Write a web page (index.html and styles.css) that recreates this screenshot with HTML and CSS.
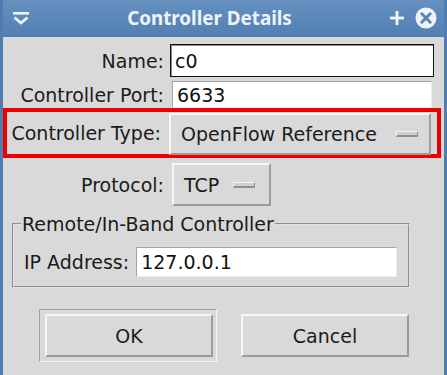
FILE: index.html
```html
<!DOCTYPE html>
<html>
<head>
<meta charset="utf-8">
<link rel="stylesheet" href="styles.css">
</head>
<body>
<div class="window">
  <div class="titlebar">
    <svg class="tb-shade" width="16" height="14" viewBox="0 0 16 14">
      <rect x="0" y="0" width="16" height="2.6" fill="#eef3f9"/>
      <polyline points="1.5,5.5 8,11 14.5,5.5" fill="none" stroke="#eef3f9" stroke-width="2.8" stroke-linejoin="miter"/>
    </svg>
    <div class="tb-title">Controller Details</div>
    <div class="tb-buttons">
      <svg width="14" height="14" viewBox="0 0 14 14">
        <rect x="5.6" y="0" width="2.8" height="14" fill="#eef3f9"/>
        <rect x="0" y="5.6" width="14" height="2.8" fill="#eef3f9"/>
      </svg>
      <svg width="22" height="22" viewBox="0 0 22 22">
        <circle cx="11" cy="11" r="10.5" fill="#eef3f9"/>
        <path d="M6.8 6.8 L15.2 15.2 M15.2 6.8 L6.8 15.2" stroke="#5a86b6" stroke-width="3" stroke-linecap="round"/>
      </svg>
    </div>
  </div>
  <div class="content">
    <div class="row row-name">
      <span class="label">Name:</span>
      <div class="entry entry-focus">c0</div>
    </div>
    <div class="row row-port">
      <span class="label">Controller Port:</span>
      <div class="entry">6633</div>
    </div>
    <div class="highlight">
      <div class="row row-type">
        <span class="label">Controller Type:</span>
        <div class="menubutton menu-wide">OpenFlow Reference<span class="indicator"></span></div>
      </div>
    </div>
    <div class="row row-proto">
      <span class="label">Protocol:</span>
      <div class="menubutton menu-narrow">TCP<span class="indicator"></span></div>
    </div>
    <fieldset class="group">
      <legend class="group-title">Remote/In-Band Controller</legend>
      <div class="ip-row">
        <span class="ip-label">IP Address:</span>
        <div class="entry entry-ip">127.0.0.1</div>
      </div>
    </fieldset>
    <div class="actions">
      <div class="default-ring"><div class="button">OK</div></div>
      <div class="button button-cancel">Cancel</div>
    </div>
  </div>
</div>
</body>
</html>
```
FILE: styles.css
```css
html, body {
  margin: 0;
  padding: 0;
  background: #d9d9d9;
}
body {
  font-family: "DejaVu Sans", sans-serif;
  font-size: 19px;
  color: #1b1b1b;
}
.window {
  width: 447px;
  height: 375px;
  box-sizing: border-box;
  border-left: 3px solid #4f7db2;
  border-right: 3px solid #4f7db2;
  background: #d9d9d9;
  overflow: hidden;
}
.titlebar {
  height: 37px;
  background: linear-gradient(#6590c0, #5280b3);
  display: flex;
  align-items: center;
  box-sizing: border-box;
  padding: 0 7px 1px 10px;
  color: #eef3f9;
}
.tb-shade {
  display: block;
  margin-top: 1px;
}
.tb-title {
  flex: 1;
  text-align: center;
  font-family: "Noto Sans", sans-serif;
  font-weight: bold;
  font-size: 18.8px;
}
.tb-buttons {
  display: flex;
  align-items: center;
  gap: 11px;
}
.tb-buttons svg { display: block; }
.content {
  padding-top: 7px;
}
.row {
  display: flex;
  align-items: center;
}
.label {
  width: 161px;
  text-align: right;
  flex: none;
}
.row-name { height: 33px; }
.row-name .entry { margin-left: 6px; width: 264px; height: 33px; }
.row-port { height: 27px; margin-top: 4px; }
.row-port .entry { margin-left: 8px; width: 260px; height: 27px; }
.entry {
  box-sizing: border-box;
  background: #fff;
  display: flex;
  align-items: center;
  padding-left: 4px;
  border-top: 1px solid #a3a3a3;
  border-left: 1px solid #a3a3a3;
  border-bottom: 1px solid #ececec;
  border-right: 1px solid #ececec;
  color: #111;
}
.entry-focus {
  border: 1px solid #111;
  box-shadow: inset 1px 1px 0 #8a8a8a;
}
.highlight {
  width: 438px;
  height: 50px;
  box-sizing: border-box;
  border: 4px solid #ee0000;
  display: flex;
  align-items: center;
}
.row-type .label {
  width: 154px;
}
.menubutton {
  box-sizing: border-box;
  display: flex;
  align-items: center;
  padding-left: 10px;
  border-top: 2px solid #f6f6f6;
  border-left: 2px solid #f6f6f6;
  border-bottom: 2px solid #9b9b9b;
  border-right: 2px solid #9b9b9b;
  background: #d9d9d9;
}
.menu-wide {
  margin-left: 8px;
  width: 262px;
  height: 42px;
  margin-top: 1px;
}
.menu-wide .indicator { margin-left: auto; margin-right: 11px; }
.menu-narrow {
  margin-left: 8px;
  width: 99px;
  height: 43px;
}
.menu-narrow .indicator { margin-left: 14px; }
.indicator {
  width: 22px;
  height: 6px;
  box-sizing: border-box;
  border-top: 1px solid #f4f4f4;
  border-left: 1px solid #f4f4f4;
  border-bottom: 2px solid #8f8f8f;
  border-right: 1px solid #8f8f8f;
  background: #cfcfcf;
  margin-top: 1px;
}
.row-proto { margin-top: 5px; }
.group {
  margin: 9px 0 0 9px;
  width: 398px;
  height: 73px;
  box-sizing: border-box;
  border: 2px groove #e2e2e2;
  padding: 0 0 0 7px;
}
.group-title {
  padding: 0 1px;
  line-height: 18px;
}
.ip-row {
  display: flex;
  align-items: center;
  margin-top: 14px;
}
.ip-label {
  margin-left: 3px;
}
.entry-ip {
  margin-left: 7px;
  width: 261px;
  height: 30px;
}
.actions {
  display: flex;
  align-items: flex-start;
  margin-top: 21px;
  padding-left: 36px;
}
.default-ring {
  box-sizing: border-box;
  width: 178px;
  height: 53px;
  border-top: 1px solid #a0a0a0;
  border-left: 1px solid #a0a0a0;
  border-bottom: 1px solid #f4f4f4;
  border-right: 1px solid #f4f4f4;
  padding: 4px 3px 0 5px;
}
.button {
  box-sizing: border-box;
  width: 168px;
  height: 43px;
  display: flex;
  align-items: center;
  justify-content: center;
  border-top: 2px solid #f6f6f6;
  border-left: 2px solid #f6f6f6;
  border-bottom: 2px solid #9b9b9b;
  border-right: 2px solid #9b9b9b;
  background: #d9d9d9;
}
.button-cancel {
  margin-left: 24px;
  margin-top: 5px;
}
```
